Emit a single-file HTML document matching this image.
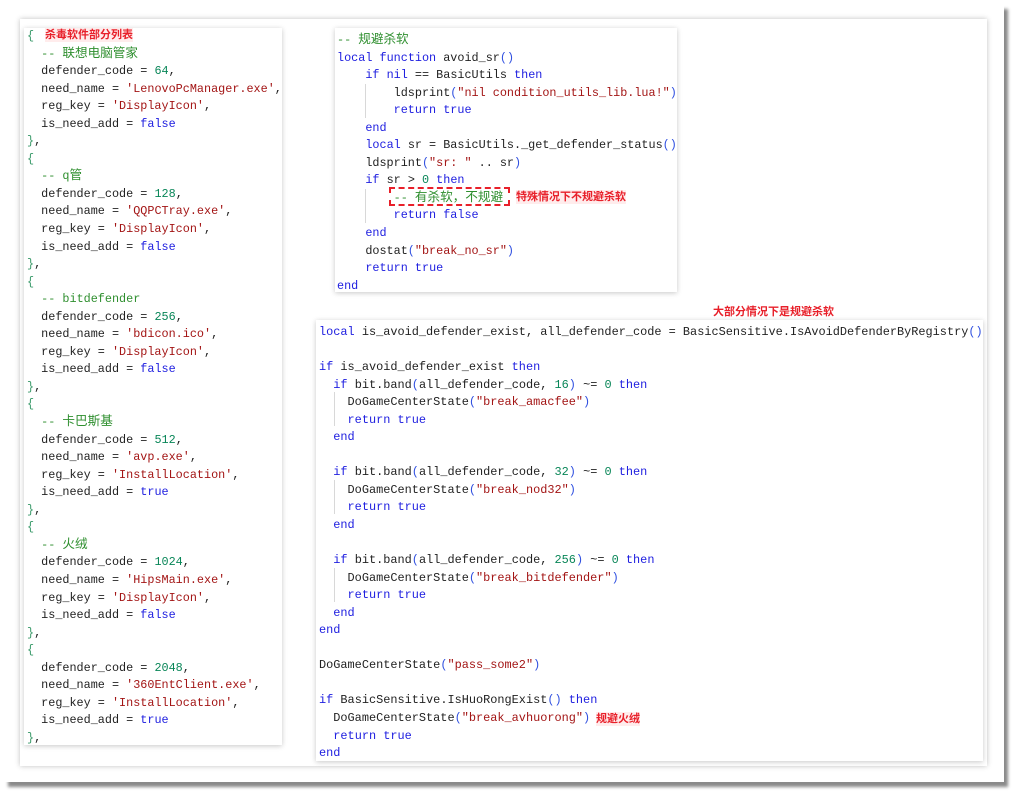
<!DOCTYPE html>
<html><head><meta charset="utf-8"><style>
*{margin:0;padding:0;box-sizing:border-box}
html,body{width:1015px;height:794px;background:#fff;overflow:hidden;position:relative}
.outer{position:absolute;left:4px;top:4px;width:1000px;height:778px;background:#fff;box-shadow:4px 5px 3px #8a8a8a}
.frame{position:absolute;left:20px;top:19px;width:967px;height:747px;background:#fff;box-shadow:0 0 5px rgba(0,0,0,.25)}
.panel{position:absolute;background:#fff;box-shadow:0 1px 5px rgba(0,0,0,.22)}
pre{position:absolute;font-family:"Liberation Mono","Noto Sans CJK SC",monospace;font-size:11.8px;line-height:17.55px;color:#222;white-space:pre}
.k{color:#2020e0}.s{color:#a31515}.n{color:#098658}.c{color:#2f8f2f}.b{color:#3a9a6a}.p{color:#3050e0}
.z{font-size:12.6px;line-height:10px}
.lbl{position:absolute;font-family:"Liberation Sans","Noto Sans CJK SC",sans-serif;font-weight:bold;font-size:11px;color:#e8202a;background:rgba(255,200,200,.35);line-height:14px;white-space:nowrap}
.g{position:absolute;width:1px;background:#d8d8d8}
</style></head><body>
<div class="outer"></div>
<div class="frame"></div>
<div class="panel" style="left:24px;top:28px;width:258px;height:717px"></div>
<div class="panel" style="left:335px;top:28px;width:342px;height:264px"></div>
<div class="panel" style="left:316px;top:320px;width:667px;height:441px"></div>

<pre style="left:27px;top:28px"><span class="b">{</span>
  <span class="c">-- <span class="z">联想电脑管家</span></span>
  defender_code = <span class="n">64</span>,
  need_name = <span class="s">'LenovoPcManager.exe'</span>,
  reg_key = <span class="s">'DisplayIcon'</span>,
  is_need_add = <span class="k">false</span>
<span class="b">}</span>,
<span class="b">{</span>
  <span class="c">-- q<span class="z">管</span></span>
  defender_code = <span class="n">128</span>,
  need_name = <span class="s">'QQPCTray.exe'</span>,
  reg_key = <span class="s">'DisplayIcon'</span>,
  is_need_add = <span class="k">false</span>
<span class="b">}</span>,
<span class="b">{</span>
  <span class="c">-- bitdefender</span>
  defender_code = <span class="n">256</span>,
  need_name = <span class="s">'bdicon.ico'</span>,
  reg_key = <span class="s">'DisplayIcon'</span>,
  is_need_add = <span class="k">false</span>
<span class="b">}</span>,
<span class="b">{</span>
  <span class="c">-- <span class="z">卡巴斯基</span></span>
  defender_code = <span class="n">512</span>,
  need_name = <span class="s">'avp.exe'</span>,
  reg_key = <span class="s">'InstallLocation'</span>,
  is_need_add = <span class="k">true</span>
<span class="b">}</span>,
<span class="b">{</span>
  <span class="c">-- <span class="z">火绒</span></span>
  defender_code = <span class="n">1024</span>,
  need_name = <span class="s">'HipsMain.exe'</span>,
  reg_key = <span class="s">'DisplayIcon'</span>,
  is_need_add = <span class="k">false</span>
<span class="b">}</span>,
<span class="b">{</span>
  defender_code = <span class="n">2048</span>,
  need_name = <span class="s">'360EntClient.exe'</span>,
  reg_key = <span class="s">'InstallLocation'</span>,
  is_need_add = <span class="k">true</span>
<span class="b">}</span>,</pre>
<div class="lbl" style="left:45px;top:28px">杀毒软件部分列表</div>

<div class="g" style="left:365px;top:84px;height:34px"></div>
<div class="g" style="left:365px;top:189px;height:34px"></div>
<pre style="left:337px;top:32px"><span class="c">-- <span class="z">规避杀软</span></span>
<span class="k">local</span> <span class="k">function</span> avoid_sr<span class="p">()</span>
    <span class="k">if</span> <span class="k">nil</span> == BasicUtils <span class="k">then</span>
        ldsprint<span class="p">(</span><span class="s">"nil condition_utils_lib.lua!"</span><span class="p">)</span>
        <span class="k">return</span> <span class="k">true</span>
    <span class="k">end</span>
    <span class="k">local</span> sr = BasicUtils._get_defender_status<span class="p">()</span>
    ldsprint<span class="p">(</span><span class="s">"sr: "</span> .. sr<span class="p">)</span>
    <span class="k">if</span> sr &gt; <span class="n">0</span> <span class="k">then</span>
        <span class="c">-- <span class="z">有杀软，不规避</span></span>
        <span class="k">return</span> <span class="k">false</span>
    <span class="k">end</span>
    dostat<span class="p">(</span><span class="s">"break_no_sr"</span><span class="p">)</span>
    <span class="k">return</span> <span class="k">true</span>
<span class="k">end</span></pre>
<div style="position:absolute;left:389px;top:187px;width:121px;height:19px;border:2px dashed #e8202a"></div>
<div class="lbl" style="left:516px;top:190px">特殊情况下不规避杀软</div>

<div class="lbl" style="left:713px;top:305px;background:none">大部分情况下是规避杀软</div>
<div class="g" style="left:334px;top:392px;height:34px"></div>
<div class="g" style="left:334px;top:480px;height:34px"></div>
<div class="g" style="left:334px;top:568px;height:34px"></div>
<pre style="left:319px;top:324px;font-size:11.9px"><span class="k">local</span> is_avoid_defender_exist, all_defender_code = BasicSensitive.IsAvoidDefenderByRegistry<span class="p">()</span>

<span class="k">if</span> is_avoid_defender_exist <span class="k">then</span>
  <span class="k">if</span> bit.band<span class="p">(</span>all_defender_code, <span class="n">16</span><span class="p">)</span> ~= <span class="n">0</span> <span class="k">then</span>
    DoGameCenterState<span class="p">(</span><span class="s">"break_amacfee"</span><span class="p">)</span>
    <span class="k">return</span> <span class="k">true</span>
  <span class="k">end</span>

  <span class="k">if</span> bit.band<span class="p">(</span>all_defender_code, <span class="n">32</span><span class="p">)</span> ~= <span class="n">0</span> <span class="k">then</span>
    DoGameCenterState<span class="p">(</span><span class="s">"break_nod32"</span><span class="p">)</span>
    <span class="k">return</span> <span class="k">true</span>
  <span class="k">end</span>

  <span class="k">if</span> bit.band<span class="p">(</span>all_defender_code, <span class="n">256</span><span class="p">)</span> ~= <span class="n">0</span> <span class="k">then</span>
    DoGameCenterState<span class="p">(</span><span class="s">"break_bitdefender"</span><span class="p">)</span>
    <span class="k">return</span> <span class="k">true</span>
  <span class="k">end</span>
<span class="k">end</span>

DoGameCenterState<span class="p">(</span><span class="s">"pass_some2"</span><span class="p">)</span>

<span class="k">if</span> BasicSensitive.IsHuoRongExist<span class="p">()</span> <span class="k">then</span>
  DoGameCenterState<span class="p">(</span><span class="s">"break_avhuorong"</span><span class="p">)</span>
  <span class="k">return</span> <span class="k">true</span>
<span class="k">end</span></pre>
<div class="lbl" style="left:596px;top:712px">规避火绒</div>
</body></html>
